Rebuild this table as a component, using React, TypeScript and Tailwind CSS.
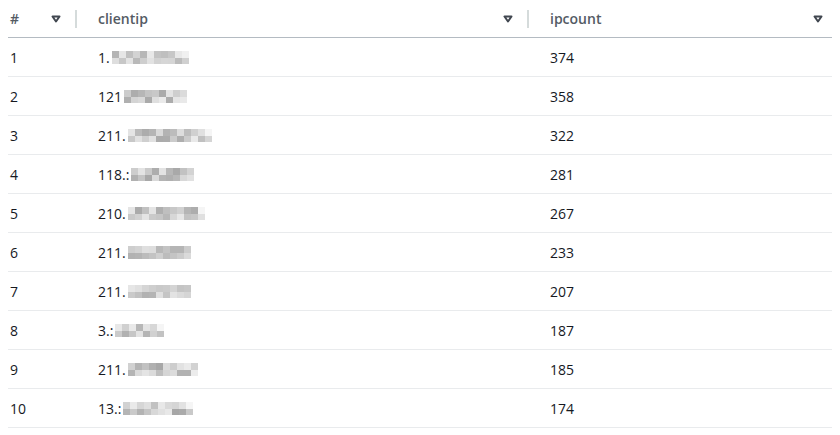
import React from "react";

const rows: { n: number; prefix: string; cols: number; count: number; seed: number }[] = [
  { n: 1, prefix: "1.", cols: 11, count: 374, seed: 3 },
  { n: 2, prefix: "121", cols: 9, count: 358, seed: 7 },
  { n: 3, prefix: "211.", cols: 12, count: 322, seed: 11 },
  { n: 4, prefix: "118.:", cols: 9, count: 281, seed: 13 },
  { n: 5, prefix: "210.", cols: 11, count: 267, seed: 17 },
  { n: 6, prefix: "211.", cols: 9, count: 233, seed: 19 },
  { n: 7, prefix: "211.", cols: 9, count: 207, seed: 23 },
  { n: 8, prefix: "3.:", cols: 7, count: 187, seed: 29 },
  { n: 9, prefix: "211.", cols: 10, count: 185, seed: 31 },
  { n: 10, prefix: "13.:", cols: 10, count: 174, seed: 37 },
];

function shades(seed: number, n: number) {
  let s = seed * 9301 + 49297;
  const out: string[] = [];
  for (let i = 0; i < n; i++) {
    s = (s * 9301 + 49297) % 233280;
    const r = s / 233280;
    let v = Math.round(165 + r * 70);
    if (i === n - 1) v = Math.min(245, v + 25);
    out.push(`rgb(${v},${v},${v})`);
  }
  return out;
}

function Mosaic({ cols, seed }: { cols: number; seed: number }) {
  const top = shades(seed, cols);
  const bot = shades(seed + 100, cols);
  return (
    <span className="inline-flex flex-col ml-[2px]">
      <span className="flex">
        {top.map((c, i) => (
          <span key={i} className="w-[7px] h-[7px]" style={{ background: c }} />
        ))}
      </span>
      <span className="flex">
        {bot.map((c, i) => (
          <span key={i} className="w-[7px] h-[6px]" style={{ background: c }} />
        ))}
      </span>
    </span>
  );
}

function Caret() {
  return (
    <svg width="16" height="16" viewBox="0 0 16 16" className="shrink-0">
      <path d="M4.5 5.5h7l-3.5 5z" fill="#fff" stroke="#414750" strokeWidth="2" strokeLinejoin="round" />
    </svg>
  );
}

export default function App() {
  return (
    <div
      className="w-[840px] h-[435px] bg-white px-2 text-[14px] text-[#16191f] overflow-hidden"
      style={{ fontFamily: '"Open Sans", "Noto Sans", sans-serif' }}
    >
      <div className="grid grid-cols-[69px_452px_1fr] h-[38px] border-b border-[#b4bbc2]">
        <div className="flex items-center pl-[2px]">
          <span className="font-semibold text-[#545b64]">#</span>
          <span className="flex-1" />
          <Caret />
          <span className="ml-[11px] w-[2px] h-[18px] bg-[#d5dbdb]" />
        </div>
        <div className="flex items-center pl-[21px]">
          <span className="font-semibold text-[#545b64]">clientip</span>
          <span className="flex-1" />
          <Caret />
          <span className="ml-[11px] w-[2px] h-[18px] bg-[#d5dbdb]" />
        </div>
        <div className="flex items-center pl-[21px] pr-[6px]">
          <span className="font-semibold text-[#545b64]">ipcount</span>
          <span className="flex-1" />
          <Caret />
        </div>
      </div>
      {rows.map((r) => (
        <div key={r.n} className="grid grid-cols-[69px_452px_1fr] h-[39px] border-b border-[#e9ebed] items-center">
          <div className="pl-[2px]">{r.n}</div>
          <div className="pl-[21px] flex items-center">
            <span>{r.prefix}</span>
            <Mosaic cols={r.cols} seed={r.seed} />
          </div>
          <div className="pl-[21px]">{r.count}</div>
        </div>
      ))}
    </div>
  );
}
